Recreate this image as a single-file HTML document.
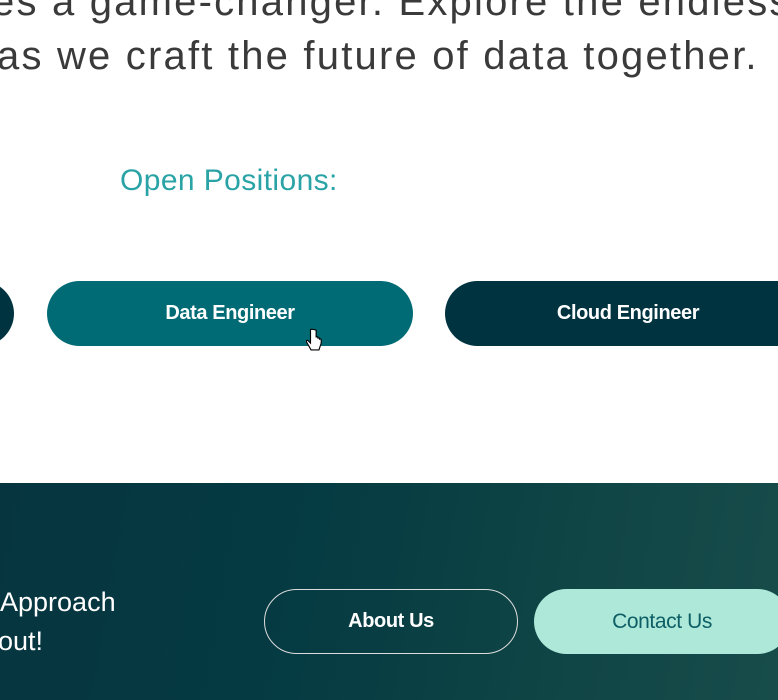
<!DOCTYPE html>
<html><head><style>
body{margin:0;width:778px;height:700px;overflow:hidden;position:relative;background:#fff;font-family:"Liberation Sans",sans-serif}
.a{position:absolute;white-space:nowrap}
.t{font-size:40px;color:#3a3a3a;line-height:1;letter-spacing:2.2px}
.btn{position:absolute;border-radius:33px;height:65px;display:flex;align-items:center;justify-content:center;font-weight:bold;font-size:20px;color:#fff;letter-spacing:-0.4px}
.foot{position:absolute;left:0;top:483px;width:778px;height:217px;background:linear-gradient(100deg,#063540 0%,#053b42 40%,#114646 75%,#174c4b 100%)}
</style></head><body>
<div class="a t" style="top:-18px;left:-8px">es a game-changer. Explore the endless p</div>
<div class="a t" style="top:36px;left:-3px">as we craft the future of data together.</div>
<div class="a" style="left:120px;top:164px;font-size:30px;color:#2aa3a6;letter-spacing:0.4px">Open Positions:</div>
<div class="btn" style="left:-350px;top:281px;width:364px;background:#003340"></div>
<div class="btn" style="left:47px;top:281px;width:366px;background:#006b75">Data Engineer</div>
<div class="btn" style="left:445px;top:281px;width:366px;background:#003340">Cloud Engineer</div>
<svg class="a" style="left:306px;top:328px" width="18" height="28" viewBox="0 0 16 24"><path d="M4 1v12l-2-2c-1-1-2 0-1.5 1l4 7h7l2-6V10c0-1-1.5-1-1.5 0v-1c0-1-1.5-1-1.5 0v-1c0-1-1.5-1-1.5 0V1.5C7 .5 4 .5 4 1z" fill="#fff" stroke="#000" stroke-width="1"/></svg>
<div class="foot"></div>
<div class="a" style="left:0;top:587px;font-size:27px;color:#fff">Approach</div>
<div class="a" style="left:-2px;top:626px;font-size:27px;color:#fff">out!</div>
<div class="btn" style="left:264px;top:589px;width:252px;height:63px;border:1px solid #ddd;background:transparent">About Us</div>
<div class="btn" style="left:534px;top:589px;width:256px;background:#ade8d9;color:#0e5e66;font-weight:normal;font-size:21px">Contact Us</div>
</body></html>
